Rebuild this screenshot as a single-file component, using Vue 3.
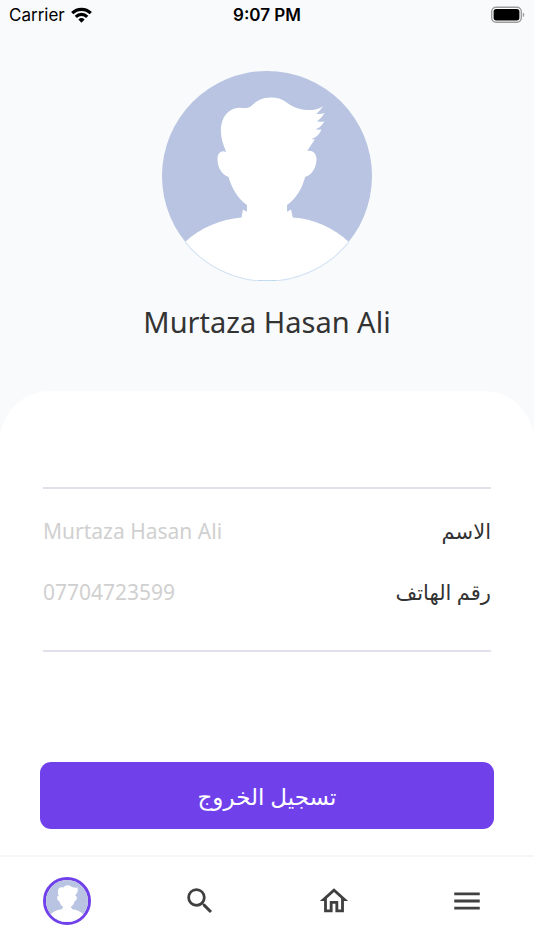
<script setup>
import { ref, h } from 'vue'

const user = ref({ name: 'Murtaza Hasan Ali', phone: '07704723599' })

const Silhouette = () =>
  h('svg', { viewBox: '22 33 628 628', width: '100%', height: '100%', 'aria-hidden': 'true', style: { display: 'block' } }, [
    h('circle', { cx: 336, cy: 347, r: 314, fill: '#b8c4e1' }),
    h('path', {
      fill: '#fff',
      d: 'M214 275C204 252 198 232 198 211C198 170 222 144 253 143C266 143 276 146 286 140C299 131 309 112 348 112C387 112 395 132 422 143C444 151 466 151 481 148Q495 146 504 138Q494 153 484 161Q498 163 509 158Q499 175 486 183Q498 186 508 183Q496 203 481 207Q489 209 499 208Q490 230 469 236L479 238L456 272C471 269 484 277 484 298C484 323 469 346 450 350C442 383 423 414 396 434V454L408 447L413 471C475 475 534 501 581 544A314 314 0 0 1 91 544C138 501 198 476 260 471L264 447L276 454V434C249 414 230 383 221 350C202 344 188 323 188 297C188 277 200 269 214 275Z',
    }),
    h('path', { d: 'M91 544A314 314 0 0 0 581 544', fill: 'none', stroke: '#d3e3f3', 'stroke-width': 3 }),
    h('path', { d: 'M310 660A314 314 0 0 0 362 660', fill: 'none', stroke: '#b5d5ee', 'stroke-width': 4 }),
  ])
</script>

<template>
  <div class="screen">
    <header class="status">
      <div class="carrier">
        <span>Carrier</span>
        <svg class="wifi" viewBox="0 0 21 16" aria-hidden="true">
          <g fill="none" stroke="#000" stroke-width="3.2">
            <path d="M1.2 6.2A13.2 13.2 0 0 1 19.8 6.2" />
            <path d="M4.8 9.8A8.1 8.1 0 0 1 16.2 9.8" />
          </g>
          <path d="M7.4 12.5a4.6 4.6 0 0 1 6.2 0L10.5 15.7z" />
        </svg>
      </div>
      <time class="time">9:07 PM</time>
      <svg class="battery" viewBox="0 0 34 18" aria-hidden="true">
        <rect x="0.7" y="1.2" width="29.6" height="15" rx="4.4" fill="#fff" stroke="#9b9c9d" stroke-width="1.4" />
        <rect x="2.6" y="3" width="25.8" height="11.4" rx="2.6" />
        <path d="M31.8 6.4c2 .8 2 3.8 0 4.6z" fill="#9b9c9d" />
      </svg>
    </header>

    <section class="profile">
      <div class="avatar"><Silhouette /></div>
      <h1 class="name">{{ user.name }}</h1>
    </section>

    <main class="card">
      <dl class="details" dir="rtl">
        <div class="row">
          <dt>الاسم</dt>
          <dd dir="ltr">{{ user.name }}</dd>
        </div>
        <div class="row">
          <dt>رقم الهاتف</dt>
          <dd dir="ltr">{{ user.phone }}</dd>
        </div>
      </dl>
      <button class="logout" type="button" dir="rtl">تسجيل الخروج</button>
    </main>

    <nav class="tabs">
      <a class="tab" href="#profile" aria-label="الحساب" aria-current="page">
        <span class="thumb"><Silhouette /></span>
      </a>
      <a class="tab" href="#search" aria-label="بحث">
        <svg class="icon" viewBox="0 0 24 24" aria-hidden="true"><path d="M15.5 14h-.79l-.28-.27A6.471 6.471 0 0 0 16 9.5 6.5 6.5 0 1 0 9.5 16c1.61 0 3.09-.59 4.23-1.57l.27.28v.79l5 4.99L20.49 19l-4.99-5zm-6 0C7.01 14 5 11.99 5 9.5S7.01 5 9.5 5 14 7.01 14 9.5 11.99 14 9.5 14z" /></svg>
      </a>
      <a class="tab" href="#home" aria-label="الرئيسية">
        <svg class="icon" viewBox="0 0 24 24" aria-hidden="true"><path d="M12 5.69l5 4.5V18h-2v-6H9v6H7v-7.81l5-4.5M12 3L2 12h3v8h6v-6h2v6h6v-8h3L12 3z" /></svg>
      </a>
      <a class="tab" href="#menu" aria-label="القائمة">
        <svg class="icon" viewBox="0 0 24 24" aria-hidden="true"><path d="M3 18h18v-2H3v2zm0-5h18v-2H3v2zm0-7v2h18V6H3z" /></svg>
      </a>
    </nav>
  </div>
</template>

<style>
body {
  margin: 0;
  background: #f9fafc;
}
</style>

<style scoped>
.screen {
  display: flex;
  flex-direction: column;
  min-height: 100vh;
  background: #f9fafc;
  color: #333;
  font-family: "Noto Sans", "DejaVu Sans", sans-serif;
}

.status {
  display: grid;
  grid-template-columns: 1fr auto 1fr;
  align-items: center;
  height: 30px;
  padding: 0 9px;
  color: #000;
  font-family: Inter, sans-serif;
  font-size: 17px;
}

.carrier {
  display: flex;
  align-items: center;
  gap: 6px;
}

.wifi {
  width: 21px;
  height: 16px;
}

.time {
  font-weight: 600;
}

.battery {
  width: 34px;
  height: 18px;
  justify-self: end;
}

.profile {
  display: flex;
  flex-direction: column;
  align-items: center;
  gap: 19px;
  padding: 41px 20px 47px;
}

.avatar {
  width: 210px;
  height: 210px;
}

.name {
  margin: 0;
  font-size: 29px;
  font-weight: 400;
  line-height: 44px;
}

.card {
  display: flex;
  flex: 1;
  flex-direction: column;
  padding: 96px 40px 26px;
  border-radius: 50px 50px 0 0;
  background: #fff;
}

.details {
  display: flex;
  flex-direction: column;
  gap: 31px;
  margin: 0 3px;
  padding: 27px 0 43px;
  border-top: 2px solid #e1e1eb;
  border-bottom: 2px solid #e1e1eb;
  font-size: 21px;
  line-height: 30px;
}

.row {
  display: flex;
  justify-content: space-between;
}

.row dd {
  margin: 0;
  color: #d0d0d0;
}

.logout {
  height: 67px;
  margin-top: auto;
  border: 0;
  border-radius: 11px;
  background: #7041eb;
  color: #fff;
  font-family: inherit;
  font-size: 23px;
}

.tabs {
  display: flex;
  padding: 20px 0 25px;
  border-top: 2px solid #f7f7f7;
  background: #fff;
}

.tab {
  display: flex;
  flex: 1;
  align-items: center;
  justify-content: center;
  height: 48px;
}

.thumb {
  box-sizing: border-box;
  width: 48px;
  height: 48px;
  border: 3px solid #7041eb;
  border-radius: 50%;
  background: #fff;
}

.icon {
  width: 34px;
  height: 34px;
  fill: #404040;
}
</style>
